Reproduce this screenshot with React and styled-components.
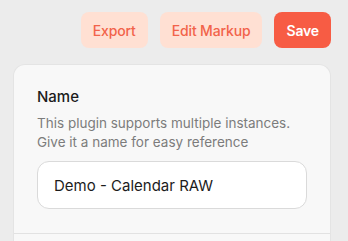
import React from "react";
import styled, { createGlobalStyle } from "styled-components";

const Global = createGlobalStyle`
  html, body { margin: 0; padding: 0; background: #ececec; }
  body { font-family: Inter, "Noto Sans", sans-serif; -webkit-font-smoothing: antialiased; }
`;

const Page = styled.div`
  padding: 12px 17px 0 13px;
`;

const Toolbar = styled.div`
  display: flex;
  justify-content: flex-end;
  gap: 12px;
`;

const Button = styled.button`
  height: 36px;
  padding: 0 12px;
  border: none;
  border-radius: 8px;
  font-family: Inter, sans-serif;
  font-size: 14px;
  letter-spacing: -0.15px;
  font-weight: ${(p) => (p.$primary ? 600 : 500)};
  background: ${(p) => (p.$primary ? "#f75c44" : "#ffe0d3")};
  color: ${(p) => (p.$primary ? "#ffffff" : "#f2634a")};
  cursor: pointer;
`;

const Card = styled.div`
  margin-top: 16px;
  background: #f8f8f8;
  border: 1px solid #e4e4e4;
  border-bottom: none;
  border-radius: 12px 12px 0 0;
`;

const Section = styled.div`
  padding: 22px 23px 24px;
  border-bottom: 1px solid #e2e2e2;
`;

const Label = styled.div`
  font-size: 15px;
  line-height: 20px;
  font-weight: 500;
  color: #1c1c1c;
`;

const Help = styled.p`
  margin: 7px 0 0;
  font-size: 13.5px;
  line-height: 19px;
  color: #7c7c7c;
`;

const Input = styled.input`
  display: block;
  box-sizing: border-box;
  width: 100%;
  height: 48px;
  margin-top: 9px;
  padding: 0 16px;
  border: 1px solid #dadada;
  border-radius: 12px;
  background: #ffffff;
  font-family: Inter, sans-serif;
  font-size: 15px;
  color: #1c1c1c;
  outline: none;
`;

const NextSection = styled.div`
  height: 40px;
`;

export default function App() {
  return (
    <>
      <Global />
      <Page>
        <Toolbar>
          <Button>Export</Button>
          <Button>Edit Markup</Button>
          <Button $primary>Save</Button>
        </Toolbar>
        <Card>
          <Section>
            <Label>Name</Label>
            <Help>
              This plugin supports multiple instances.
              <br />
              Give it a name for easy reference
            </Help>
            <Input defaultValue="Demo - Calendar RAW" />
          </Section>
          <NextSection />
        </Card>
      </Page>
    </>
  );
}
